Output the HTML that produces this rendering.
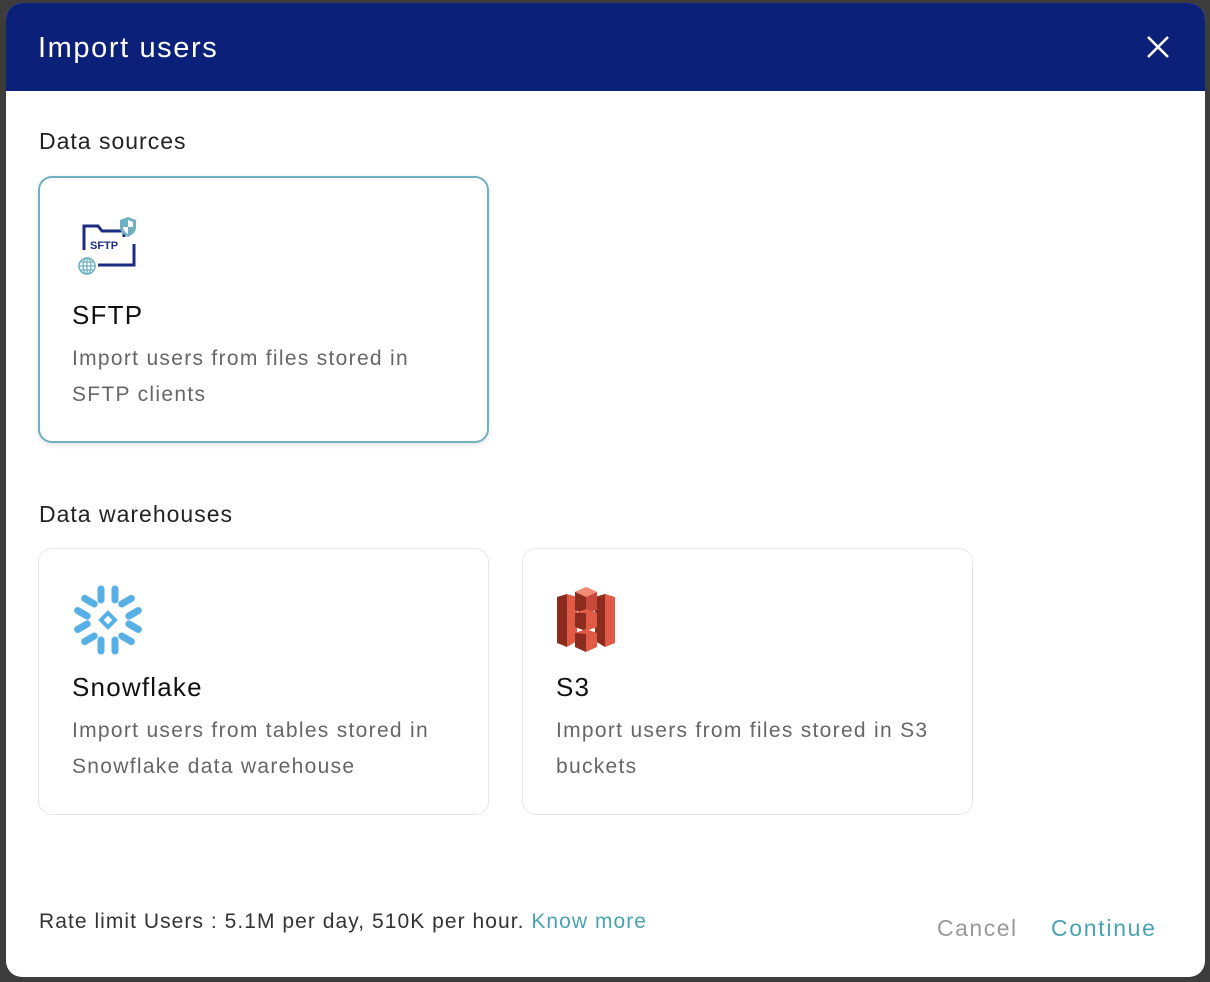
<!DOCTYPE html>
<html><head><meta charset="utf-8"><style>
html,body{margin:0;padding:0;width:1210px;height:982px;background:#3c3c3c;overflow:hidden;font-family:"Liberation Sans",sans-serif}
.modal{position:absolute;left:6px;top:3px;width:1199px;height:974px;background:#fff;border-radius:16px;overflow:hidden}
.hdr{height:88px;background:#0b2179;color:#fff;position:relative}
.hdr h1{margin:0;position:absolute;left:32px;top:29px;font-size:29px;font-weight:normal;letter-spacing:1.6px}
.x{position:absolute;right:35px;top:32px}
.sec{position:absolute;left:33px;font-size:23px;color:#222;letter-spacing:1px}
.card{position:absolute;width:451px;height:267px;border:1px solid #e6e6e6;border-radius:14px;box-sizing:border-box;background:#fff}
.card.sel{border:2px solid #6fb1c0;box-shadow:0 2px 6px rgba(0,0,0,.1)}
.card .t{position:absolute;left:33px;top:123px;font-size:26px;color:#111;letter-spacing:1.2px}
.card .d{position:absolute;left:33px;top:164px;font-size:21px;line-height:36px;color:#666;width:400px;letter-spacing:1.3px}
.card .ic{position:absolute;left:30px;top:30px}
.foot{position:absolute;left:33px;top:907px;font-size:21px;color:#333;letter-spacing:1.05px}
.foot a{color:#4aa3b5;text-decoration:none}
.btn{position:absolute;top:912px;font-size:23px}
</style></head><body>
<div class="modal">
<div class="hdr"><h1>Import users</h1>
<svg class="x" width="24" height="24" viewBox="0 0 24 24"><path d="M2 2L22 22M22 2L2 22" stroke="#fff" stroke-width="2.6"/></svg></div>
<div class="sec" style="top:125px">Data sources</div>
<div class="card sel" style="left:32px;top:173px">
<svg class="ic" style="left:36px;top:38px" width="64" height="62" viewBox="0 0 64 62">
<path d="M8 34V10h14l4 5h22v6M58 28v21H22" fill="none" stroke="#1a2d82" stroke-width="3"/>
<text x="14" y="33" font-family="Liberation Sans" font-weight="bold" font-size="11" fill="#1a2d82">SFTP</text>
<path d="M52 1l8 3v7c0 5-4 8-8 10-4-2-8-5-8-10V4z" fill="#6fb1c0"/>
<path d="M52 4l5 2v5h-5zM52 11h-5c0 3 2 5 5 7z" fill="#fff"/>
<circle cx="11" cy="50" r="8" fill="none" stroke="#6fb1c0" stroke-width="1.6"/>
<path d="M3 50h16M11 42v16M5 46h12M5 54h12" stroke="#6fb1c0" stroke-width="1.3" fill="none"/>
<ellipse cx="11" cy="50" rx="4" ry="8" fill="none" stroke="#6fb1c0" stroke-width="1.3"/>
</svg>
<div class="t" style="left:32px;top:122px">SFTP</div>
<div class="d" style="left:32px;top:163px;width:345px">Import users from files stored in SFTP clients</div>
</div>
<div class="sec" style="top:498px">Data warehouses</div>
<div class="card" style="left:32px;top:545px">
<svg class="ic" style="left:32px;top:34px" width="74" height="74" viewBox="-37 -37 74 74">
<g fill="none" stroke="#56b0e6" stroke-width="7" stroke-linecap="round" stroke-linejoin="round">
<g><path d="M-7 -31L-7 -20"/><path d="M7 -31L7 -20"/></g>
<g transform="rotate(60)"><path d="M-7 -31L-7 -20"/><path d="M7 -31L7 -20"/></g>
<g transform="rotate(120)"><path d="M-7 -31L-7 -20"/><path d="M7 -31L7 -20"/></g>
<g transform="rotate(180)"><path d="M-7 -31L-7 -20"/><path d="M7 -31L7 -20"/></g>
<g transform="rotate(240)"><path d="M-7 -31L-7 -20"/><path d="M7 -31L7 -20"/></g>
<g transform="rotate(300)"><path d="M-7 -31L-7 -20"/><path d="M7 -31L7 -20"/></g>
</g>
<path d="M0 -7L7 0 0 7-7 0z" fill="none" stroke="#56b0e6" stroke-width="4"/>
</svg>
<div class="t">Snowflake</div>
<div class="d">Import users from tables stored in Snowflake data warehouse</div>
</div>
<div class="card" style="left:516px;top:545px">
<svg class="ic" style="left:34px;top:36px" width="58" height="68" viewBox="0 0 58 68">
<path d="M0 12l10-3v53L0 58z" fill="#8c2c1f"/><path d="M10 9l10 3v44l-10 6z" fill="#e05a45"/>
<path d="M58 12l-10-3v53l10-4z" fill="#e05a45"/><path d="M48 9l-10 3v44l10 6z" fill="#8c2c1f"/>
<path d="M18 7l11-5 11 5v18l-11 4-11-4z" fill="#c9493a"/><path d="M29 2l11 5-11 5-11-5z" fill="#f08b78"/><path d="M29 12v17l-11-4V7z" fill="#8c2c1f"/>
<path d="M18 28l11-4 11 4v14l-11 4-11-4z" fill="#e05a45"/><path d="M29 28v18l-11-4V28z" fill="#8c2c1f"/>
<path d="M18 48l11-4 11 4v14l-11 5-11-5z" fill="#e05a45"/><path d="M29 49v18l-11-5V48z" fill="#8c2c1f"/>
</svg>
<div class="t">S3</div>
<div class="d">Import users from files stored in S3 buckets</div>
</div>
<div class="foot">Rate limit Users : 5.1M per day, 510K per hour. <a>Know more</a></div>
<div class="btn" style="left:931px;color:#999;letter-spacing:1.5px">Cancel</div>
<div class="btn" style="left:1045px;color:#4aa3b5;letter-spacing:1.7px">Continue</div>
</div>
</body></html>
